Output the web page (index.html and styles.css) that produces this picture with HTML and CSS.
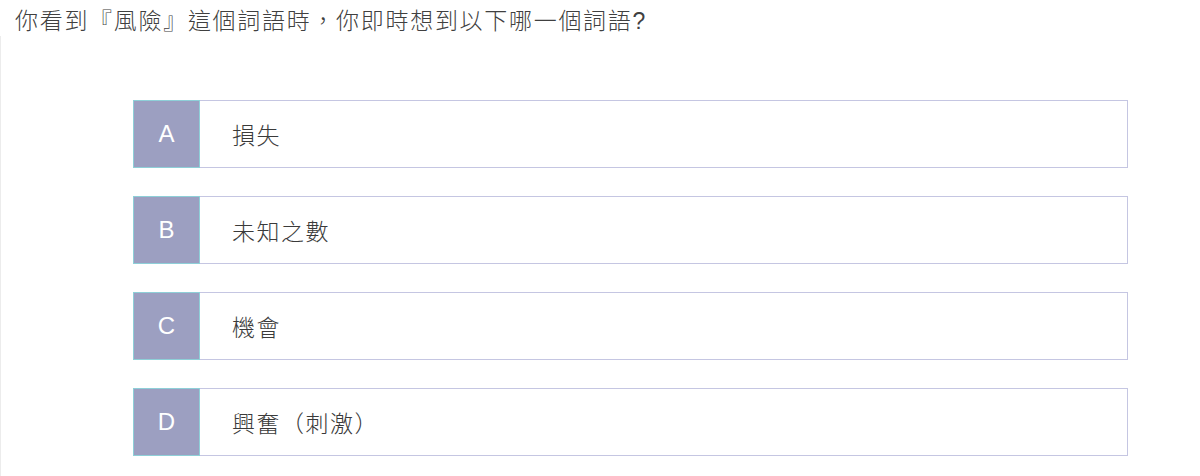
FILE: index.html
```html
<!DOCTYPE html>
<html lang="zh-Hant">
<head>
<meta charset="utf-8">
<link rel="stylesheet" href="styles.css">
</head>
<body>
<div class="page">
  <div class="question">你看到『風險』這個詞語時，你即時想到以下哪一個詞語?</div>
  <div class="panel">
    <div class="options">
      <div class="option"><div class="label">A</div><div class="text">損失</div></div>
      <div class="option"><div class="label">B</div><div class="text">未知之數</div></div>
      <div class="option"><div class="label">C</div><div class="text">機會</div></div>
      <div class="option"><div class="label">D</div><div class="text">興奮（刺激）</div></div>
    </div>
  </div>
</div>
</body>
</html>
```

FILE: styles.css
```css
html, body {
  margin: 0;
  padding: 0;
  background: #ffffff;
}
body {
  width: 1200px;
  height: 476px;
  overflow: hidden;
  font-family: "Liberation Sans", "Noto Sans CJK TC", sans-serif;
  color: #333333;
}
.page {
  display: flex;
  flex-direction: column;
}
.question {
  font-family: "Liberation Sans", "Noto Sans CJK TC", sans-serif;
  font-weight: 300;
  font-size: 23px;
  letter-spacing: 1.7px;
  line-height: 36px;
  padding: 3px 0 0 15px;
  color: #404040;
  height: 33px;
}
.panel {
  border-left: 1px solid #ececec;
  height: 440px;
  padding-top: 64px;
  box-sizing: border-box;
}
.options {
  display: flex;
  flex-direction: column;
  gap: 28px;
  margin-left: 132px;
  width: 995px;
}
.option {
  display: flex;
  align-items: stretch;
  height: 66px;
  border: 1px solid #c5c6e2;
  background: #ffffff;
}
.label {
  width: 65px;
  margin: -1px 0 -1px -1px;
  border: 1px solid #8ecfd8;
  background: #9c9fc1;
  color: #ffffff;
  font-family: "Liberation Sans", sans-serif;
  font-size: 24px;
  display: flex;
  align-items: center;
  justify-content: center;
}
.text {
  display: flex;
  align-items: center;
  padding-left: 32px;
  font-family: "Noto Sans CJK TC", sans-serif;
  font-weight: 300;
  font-size: 23px;
  letter-spacing: 1.5px;
  color: #3a3a3a;
}
```
